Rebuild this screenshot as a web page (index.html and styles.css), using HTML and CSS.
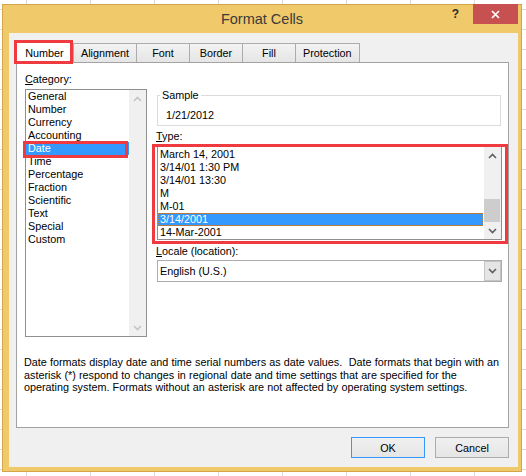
FILE: index.html
```html
<!DOCTYPE html>
<html lang="en">
<head>
<meta charset="utf-8">
<title>Format Cells</title>
<link rel="stylesheet" href="styles.css">
</head>
<body>
<div class="window">
  <div class="titlebar">
    <div class="title">Format Cells</div>
    <div class="controls">
      <span class="help">?</span>
      <span class="close"><svg width="9" height="9" viewBox="0 0 9 9"><path d="M1 1L8 8M8 1L1 8" stroke="#fff" stroke-width="1.7" fill="none"/></svg></span>
    </div>
  </div>
  <div class="client">
    <div class="tabs">
      <div class="tab active">Number<span class="mark mark-tab"></span></div>
      <div class="tab">Alignment</div>
      <div class="tab">Font</div>
      <div class="tab">Border</div>
      <div class="tab">Fill</div>
      <div class="tab">Protection</div>
    </div>
    <div class="panel">
      <div class="columns">
        <div class="col-left">
          <div class="label"><u>C</u>ategory:</div>
          <div class="listbox cat-list">
            <div class="items">
              <div class="item">General</div>
              <div class="item">Number</div>
              <div class="item">Currency</div>
              <div class="item">Accounting</div>
              <div class="item selected">Date<span class="mark mark-date"></span></div>
              <div class="item">Time</div>
              <div class="item">Percentage</div>
              <div class="item">Fraction</div>
              <div class="item">Scientific</div>
              <div class="item">Text</div>
              <div class="item">Special</div>
              <div class="item">Custom</div>
            </div>
            <div class="scrollbar">
              <div class="sb-btn"><svg width="9" height="6" viewBox="0 0 9 6"><path d="M1 5L4.5 1.5L8 5" stroke="#c4c4c4" stroke-width="1.6" fill="none"/></svg></div>
              <div class="sb-track"></div>
              <div class="sb-btn"><svg width="9" height="6" viewBox="0 0 9 6"><path d="M1 1L4.5 4.5L8 1" stroke="#c4c4c4" stroke-width="1.6" fill="none"/></svg></div>
            </div>
          </div>
        </div>
        <div class="col-right">
          <fieldset class="sample">
            <legend>Sample</legend>
            <div class="sample-value">1/21/2012</div>
          </fieldset>
          <div class="label label-type"><u>T</u>ype:</div>
          <div class="listbox type-list">
            <div class="items items-type">
              <div class="item">March 14, 2001</div>
              <div class="item">3/14/01 1:30 PM</div>
              <div class="item">3/14/01 13:30</div>
              <div class="item">M</div>
              <div class="item">M-01</div>
              <div class="item selected focused">3/14/2001</div>
              <div class="item">14-Mar-2001</div>
            </div>
            <div class="scrollbar">
              <div class="sb-btn"><svg width="9" height="6" viewBox="0 0 9 6"><path d="M1 5L4.5 1.5L8 5" stroke="#5f5f5f" stroke-width="1.6" fill="none"/></svg></div>
              <div class="sb-track"><div class="sb-thumb"></div></div>
              <div class="sb-btn"><svg width="9" height="6" viewBox="0 0 9 6"><path d="M1 1L4.5 4.5L8 1" stroke="#5f5f5f" stroke-width="1.6" fill="none"/></svg></div>
            </div>
            <span class="mark mark-type"></span>
          </div>
          <div class="label label-locale"><u>L</u>ocale (location):</div>
          <div class="combo">
            <div class="combo-text">English (U.S.)</div>
            <div class="combo-btn"><svg width="9" height="6" viewBox="0 0 9 6"><path d="M1 1L4.5 4.5L8 1" stroke="#5f5f5f" stroke-width="1.6" fill="none"/></svg></div>
          </div>
        </div>
      </div>
      <p class="desc">Date formats display date and time serial numbers as date values.&nbsp; Date formats that begin with an<br>asterisk (*) respond to changes in regional date and time settings that are specified for the<br>operating system. Formats without an asterisk are not affected by operating system settings.</p>
    </div>
    <div class="buttons">
      <button class="btn default">OK</button>
      <button class="btn">Cancel</button>
    </div>
  </div>
</div>
</body>
</html>
```

FILE: styles.css
```css
* { box-sizing: border-box; }
html, body { margin: 0; padding: 0; }
body {
  width: 526px;
  height: 476px;
  overflow: hidden;
  background-color: #ffffff;
  background-image:
    linear-gradient(to right, #dadada 1px, transparent 1px),
    linear-gradient(to bottom, #dadada 1px, transparent 1px);
  background-size: 64px 100%, 100% 20px;
  background-position: 26px 0, 0 9px;
  font-family: "Liberation Sans", Arial, sans-serif;
  font-size: 10.8px;
  color: #000;
}

.window {
  width: 520px;
  height: 468px;
  margin: 4px 0 0 2px;
  border: 1px solid #d3a64a;
  background: #f0c96b;
  display: flex;
  flex-direction: column;
}

.titlebar {
  flex: none;
  height: 28px;
  display: grid;
  grid-template-columns: 1fr auto 1fr;
}
.title {
  grid-column: 2;
  font-size: 14.5px;
  line-height: 28px;
  color: #3a3a3a;
}
.controls {
  grid-column: 3;
  justify-self: end;
  display: flex;
  align-items: flex-start;
  margin: -1px 3px 0 0;
}
.help {
  font-weight: bold;
  font-size: 12px;
  line-height: 18px;
  margin: 1px 14px 0 0;
  color: #2b2b2b;
}
.close {
  width: 45px;
  height: 20px;
  background: #c75050;
  display: flex;
  align-items: center;
  justify-content: center;
}

.client {
  flex: none;
  height: 434px;
  margin: 0 3px 0 6px;
  background: #f0f0f0;
  padding: 7px 9px 0 7px;
}

.tabs {
  display: flex;
  align-items: flex-end;
  height: 22px;
}
.tab {
  height: 19px;
  min-width: 54px;
  padding: 0 7px;
  margin-left: -1px;
  border: 1px solid #acacac;
  border-bottom: 0;
  background: linear-gradient(#f3f3f3, #e5e5e5);
  text-align: center;
  line-height: 18px;
  white-space: nowrap;
}
.tab.active {
  position: relative;
  z-index: 1;
  height: 23px;
  min-width: 57px;
  margin: 0 0 -1px 0;
  padding-top: 3px;
  line-height: 19px;
  background: #ffffff;
}
.tab.active + .tab { margin-left: 0; }

.panel {
  height: 366px;
  border: 1px solid #a3a3a3;
  background: #ffffff;
  padding: 10px 0 0 8px;
}
.columns {
  display: flex;
  gap: 9px;
}
.col-left { width: 122px; }
.col-right { width: 346px; padding-top: 16px; }

.label {
  line-height: 13px;
  margin-bottom: 3px;
  white-space: nowrap;
}
.label-type { margin-top: 4px; }
.label-locale { margin-top: 5px; margin-bottom: 2px; }

.listbox {
  position: relative;
  display: flex;
  border: 1px solid #8f8f8f;
  background: #ffffff;
}
.cat-list { height: 248px; }
.type-list { height: 94px; margin-left: 1px; }

.items { flex: 1; min-width: 0; }
.items-type { padding-top: 1px; }
.item {
  height: 13px;
  line-height: 13px;
  padding-left: 2px;
  white-space: nowrap;
}
.item.selected {
  position: relative;
  background: #3399ff;
  color: #ffffff;
}
.item.focused {
  border: 1px dotted #b77a3c;
  line-height: 11px;
  padding-left: 1px;
  margin-right: 1px;
}

.scrollbar {
  width: 17px;
  display: flex;
  flex-direction: column;
  background: #f0f0f0;
}
.sb-btn {
  height: 17px;
  display: flex;
  align-items: center;
  justify-content: center;
}
.sb-track { flex: 1; }
.sb-thumb {
  height: 23px;
  margin: 35px 1px 0 0;
  background: #cdcdcd;
}

.sample {
  margin: 0 1px;
  padding: 7px 8px 3px 8px;
  border: 1px solid #dcdcdc;
  min-width: 0;
}
.sample legend {
  padding: 0 2px;
  margin-left: -6px;
  line-height: 13px;
}
.sample-value { line-height: 13px; }

.combo {
  height: 22px;
  margin-left: 1px;
  border: 1px solid #acacac;
  background: #ffffff;
  display: flex;
  align-items: center;
}
.combo-text { flex: 1; padding-left: 2px; }
.combo-btn {
  width: 17px;
  height: 20px;
  background: #e5e5e5;
  border: 1px solid #c4c4c4;
  display: flex;
  align-items: center;
  justify-content: center;
}

.desc {
  margin: 19px 0 0 -1px;
  line-height: 12.5px;
  word-spacing: 0.2px;
  white-space: nowrap;
}

.buttons {
  display: flex;
  justify-content: flex-end;
  gap: 10px;
  margin-top: 9px;
}
.btn {
  width: 74px;
  height: 21px;
  padding: 0;
  border: 1px solid #acacac;
  background: linear-gradient(#f0f0f0, #e5e5e5);
  font: inherit;
  color: #000;
}
.btn.default { border-color: #3399ff; }

.mark {
  position: absolute;
  border: 3px solid #ef3a3f;
  pointer-events: none;
}
.mark-tab { top: -1px; left: -3px; right: -1px; bottom: -1px; }
.mark-date { top: -1px; left: -3px; right: 1px; bottom: -3px; }
.mark-type { top: -3px; left: -6px; right: -7px; bottom: -5px; }
```
